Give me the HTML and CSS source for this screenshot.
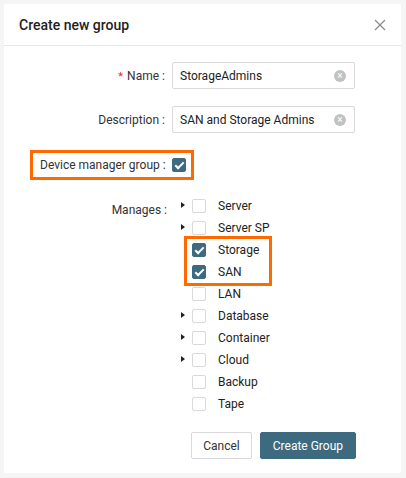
FILE: index.html
```html
<!DOCTYPE html>
<html lang="en">
<head>
    <meta charset="UTF-8">
    <meta name="viewport" content="width=device-width, initial-scale=1.0">
    <title>Create new group</title>
    <link rel="stylesheet" href="styles.css">
</head>
<body>
    <div class="dialog">
        <div class="header">
            <h1>Create new group</h1>
            <svg class="close" width="12" height="12" viewBox="0 0 12 12">
                <path d="M1 1L11 11M11 1L1 11" stroke="#8c8c8c" stroke-width="1.3" fill="none"/>
            </svg>
        </div>
        <div class="body">
            <div class="row">
                <div class="label"><span class="req">*</span>Name<span class="colon">:</span></div>
                <div class="input">
                    <span>StorageAdmins</span>
                    <span class="clear">&times;</span>
                </div>
            </div>
            <div class="row">
                <div class="label">Description<span class="colon">:</span></div>
                <div class="input">
                    <span>SAN and Storage Admins</span>
                    <span class="clear">&times;</span>
                </div>
            </div>
            <div class="row device">
                <div class="mark">
                    <div class="label">Device manager group<span class="colon">:</span></div>
                    <span class="check on"></span>
                </div>
            </div>
            <div class="row manages">
                <div class="label">Manages<span class="colon">:</span></div>
                <div class="tree">
                    <div class="item"><span class="arrow"></span><span class="check"></span><span class="name">Server</span></div>
                    <div class="item"><span class="arrow"></span><span class="check"></span><span class="name">Server SP</span></div>
                    <div class="mark group">
                        <div class="item"><span class="check on"></span><span class="name">Storage</span></div>
                        <div class="item"><span class="check on"></span><span class="name">SAN</span></div>
                    </div>
                    <div class="item"><span class="noarrow"></span><span class="check"></span><span class="name">LAN</span></div>
                    <div class="item"><span class="arrow"></span><span class="check"></span><span class="name">Database</span></div>
                    <div class="item"><span class="arrow"></span><span class="check"></span><span class="name">Container</span></div>
                    <div class="item"><span class="arrow"></span><span class="check"></span><span class="name">Cloud</span></div>
                    <div class="item"><span class="noarrow"></span><span class="check"></span><span class="name">Backup</span></div>
                    <div class="item"><span class="noarrow"></span><span class="check"></span><span class="name">Tape</span></div>
                </div>
            </div>
            <div class="buttons">
                <button class="btn">Cancel</button>
                <button class="btn primary">Create Group</button>
            </div>
        </div>
    </div>
</body>
</html>
```

FILE: styles.css
```css
body {
    margin: 0;
    padding: 4px;
    background: #f5f5f5;
    font-family: Roboto, "Liberation Sans", sans-serif;
    font-size: 12px;
    color: #333;
}
.dialog {
    width: 397px;
    height: 469px;
    background: #fff;
    box-sizing: border-box;
}
.header {
    height: 42px;
    border-bottom: 1px solid #e8e8e8;
    display: flex;
    align-items: center;
    justify-content: space-between;
    padding: 0 15px;
    box-sizing: border-box;
}
.header h1 {
    margin: 0;
    font-size: 14px;
    font-weight: 500;
    color: #222;
}
.body {
    padding: 16px 46px 15px 0;
}
.row {
    display: flex;
    align-items: center;
    margin-bottom: 17px;
}
.label {
    width: 168px;
    flex: none;
    text-align: right;
    padding-right: 7px;
    box-sizing: border-box;
    white-space: nowrap;
}
.colon {
    margin-left: 3px;
}
.req {
    color: #f5222d;
    margin-right: 4px;
    font-size: 11px;
}
.input {
    flex: 1;
    height: 27px;
    border: 1px solid #d9d9d9;
    border-radius: 2px;
    box-sizing: border-box;
    display: flex;
    align-items: center;
    justify-content: space-between;
    padding: 0 8px 0 7px;
    color: #222;
}
.clear {
    width: 12px;
    height: 12px;
    border-radius: 50%;
    background: #c2c2c2;
    color: #fff;
    font-size: 10px;
    line-height: 12px;
    text-align: center;
}
.row.device {
    margin-top: 15px;
    margin-bottom: 15px;
}
.mark {
    border: 3px solid #ff6a00;
}
.device .mark {
    display: flex;
    align-items: center;
    margin-left: 26px;
    height: 30px;
    box-sizing: border-box;
    padding: 0 5px 0 7px;
}
.device .label {
    width: 132px;
}
.check {
    width: 14px;
    height: 14px;
    border: 1px solid #d9d9d9;
    border-radius: 2px;
    box-sizing: border-box;
    background: #fff;
    flex: none;
    position: relative;
}
.check.on {
    background: #3e6a80;
    border-color: #3e6a80;
}
.check.on::after {
    content: "";
    position: absolute;
    left: 4px;
    top: 1px;
    width: 3px;
    height: 7px;
    border: solid #fff;
    border-width: 0 2px 2px 0;
    transform: rotate(45deg);
}
.manages {
    align-items: flex-start;
}
.manages .label {
    line-height: 22px;
    width: 174px;
    padding-right: 11px;
    padding-top: 4px;
}
.tree {
    display: flex;
    flex-direction: column;
}
.item {
    display: flex;
    align-items: center;
    height: 22px;
}
.arrow, .noarrow {
    width: 14px;
    flex: none;
    height: 7px;
}
.arrow {
    position: relative;
}
.arrow::before {
    content: "";
    position: absolute;
    left: 3px;
    top: -1px;
    border-left: 4px solid #222;
    border-top: 3.5px solid transparent;
    border-bottom: 3.5px solid transparent;
}
.name {
    margin-left: 12px;
    color: #222;
}
.mark.group {
    margin: -3px 0 -3px 6px;
    padding: 0 0 0 5px;
    width: 88px;
    box-sizing: border-box;
}
.buttons {
    display: flex;
    justify-content: flex-end;
    gap: 8px;
    margin-top: 16px;
    margin-right: -1px;
}
.btn {
    height: 27px;
    padding: 0 11px;
    border: 1px solid #d9d9d9;
    border-radius: 2px;
    background: #fff;
    font-family: inherit;
    font-size: 12px;
    color: #333;
}
.btn.primary {
    background: #3e6a80;
    border-color: #3e6a80;
    color: #fff;
    padding: 0 12px;
}
```
